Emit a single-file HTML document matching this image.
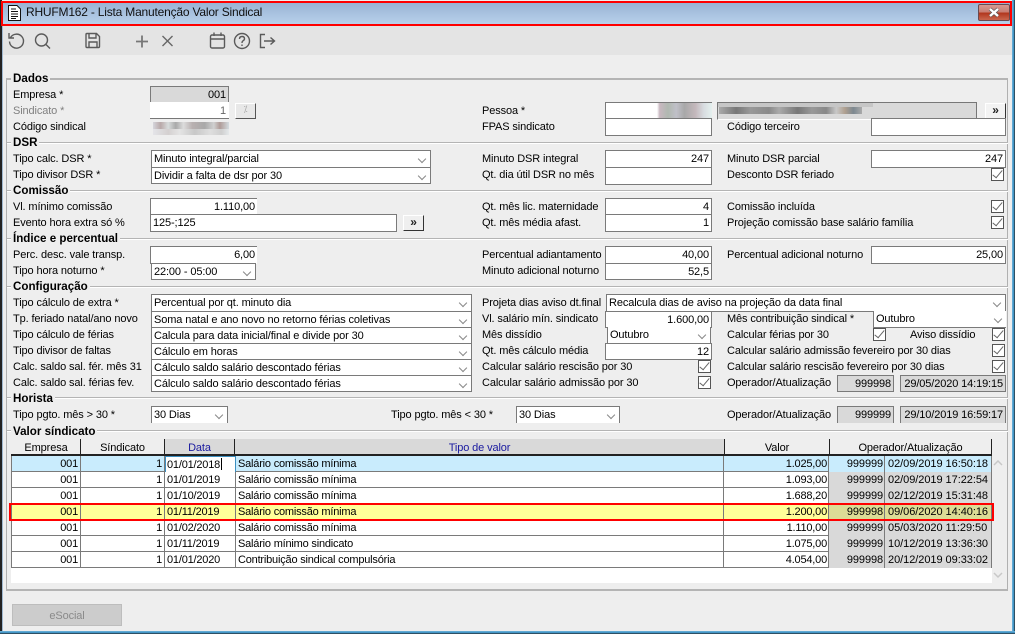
<!DOCTYPE html>
<html><head><meta charset="utf-8">
<style>
html,body{margin:0;padding:0;width:1016px;height:635px;overflow:hidden;background:#fff;font-family:"Liberation Sans",sans-serif;font-size:11px;letter-spacing:-.12px;color:#000}
#w{position:absolute;left:0;top:0;width:1016px;height:635px;overflow:hidden}
.a{position:absolute;box-sizing:border-box}
.t{position:absolute;white-space:nowrap;line-height:14px;height:14px;margin-top:1px}
.g{color:#808080}
.b{position:absolute;white-space:nowrap;font-weight:bold;line-height:14px;background:#eee;padding:0 2px;font-size:11.6px;letter-spacing:0;color:#000;margin-top:1px}
.h{position:absolute;height:2px;background:#b4b4b4;border-bottom:1px solid #fff;box-sizing:border-box}
.i{position:absolute;box-sizing:border-box;border:1px solid #7a7a7a;background:#fff;line-height:17px;text-align:right;padding:0 2px;white-space:nowrap;overflow:hidden}
.d{background:#d9d9d9}
.s{position:absolute;box-sizing:border-box;border:1px solid #7a7a7a;background:#fff;line-height:16px;padding:0 2px;white-space:nowrap;overflow:hidden}
.s:after{content:"";position:absolute;right:5px;top:5px;width:5px;height:5px;border-right:1px solid #888;border-bottom:1px solid #888;transform:rotate(45deg)}
.c{position:absolute;width:13px;height:13px;box-sizing:border-box;border:1px solid #555;background:#fff}
.c:after{content:"";position:absolute;left:3px;top:-1px;width:4px;height:9px;border-right:1.4px solid #666;border-bottom:1.4px solid #666;transform:rotate(40deg)}
.btn{position:absolute;box-sizing:border-box;width:21px;height:16px;background:#efefef;border-top:1px solid #fff;border-left:1px solid #fff;border-right:1px solid #333;border-bottom:1px solid #333;text-align:center;line-height:12px;font-size:12px;font-weight:bold;color:#222}
.hd{position:absolute;top:439px;height:16px;background:#eeeeee;text-align:center;line-height:18px;border-right:1px solid #222;box-sizing:border-box}
.r{position:absolute;height:16px;left:11px;width:981px;background:#fff;border-bottom:1px solid #7a7a7a;box-sizing:border-box;letter-spacing:-.2px}
.r div{position:absolute;top:0;height:16px;line-height:17px;white-space:nowrap;box-sizing:border-box;padding:0 2px;border-right:1px solid #7a7a7a}
.n{text-align:right}
.c0{left:0;width:70px}.c1{left:70px;width:84px}.c2{left:154px;width:71px}.c3{left:225px;width:488px}.r .c4{left:713px;width:105px;padding-right:1px}.r .c5{left:818px;width:56px;background:#d9d9d9;padding-right:1px;letter-spacing:-.1px}.r .c6{left:874px;width:107px;background:#d9d9d9;padding-left:3px;letter-spacing:-.05px}
</style></head>
<body><div id="w">
<!-- window frame -->
<div class="a" style="left:0;top:0;width:1013px;height:632px;background:#eeeeee"></div>
<div class="a" style="left:0;top:0;width:2px;height:632px;background:#222"></div>
<div class="a" style="left:2px;top:24px;width:1px;height:608px;background:#9fb8d0"></div>
<div class="a" style="left:1012px;top:0;width:3px;height:634px;background:linear-gradient(90deg,#6fb4dc,#3c8fc0 60%,#222)"></div>
<div class="a" style="left:0;top:631px;width:1015px;height:3px;background:linear-gradient(180deg,#6fb4dc,#3c8fc0 60%,#222)"></div>
<!-- title -->
<div class="a" style="left:2px;top:2px;width:1010px;height:23px;background:linear-gradient(180deg,#98b2d3,#b9d2ec)"></div>
<svg class="a" style="left:7px;top:4px" width="15" height="18" viewBox="0 0 15 18"><path d="M1.5 1.5H10L13.5 5V16.5H1.5Z" fill="#fff" stroke="#111"/><path d="M4 5H9M4 7.5H11M4 10H11M4 12.5H11M4 14.5H9" stroke="#111"/></svg>
<div class="t" style="left:26px;top:4px;font-size:12px;letter-spacing:-.2px;line-height:15px;height:15px;color:#111">RHUFM162 - Lista Manutenção Valor Sindical</div>
<div class="a" style="left:978px;top:4px;width:32px;height:17px;border:1px solid #6a4a50;border-radius:2px;background:linear-gradient(180deg,#d49a92 0%,#c97f74 45%,#b2381f 55%,#c9664e 100%)"></div>
<svg class="a" style="left:978px;top:4px" width="32" height="17" viewBox="0 0 32 17"><path d="M12 5L20 12M20 5L12 12" stroke="#555" stroke-width="3.6"/><path d="M12 5L20 12M20 5L12 12" stroke="#fff" stroke-width="2.4"/></svg>
<div class="a" style="left:1px;top:1px;width:1011px;height:25px;border:2px solid #f00"></div>
<!-- toolbar -->
<div class="a" style="left:3px;top:26px;width:1009px;height:29px;background:#e4e4e4"></div>
<svg class="a" style="left:0;top:26px" width="290" height="30" viewBox="0 0 290 30" fill="none" stroke="#5a5a5a" stroke-width="1.4">
<path d="M10.5 11.5A7 7 0 1 1 9.5 15.5M9 7V12H14"/>
<circle cx="41.5" cy="14" r="6"/><path d="M46 18.5L50 22.5"/>
<path d="M86 8.5Q86 7.5 87 7.5H96.5L99.5 10.5V20.5Q99.5 21.5 98.5 21.5H87Q86 21.5 86 20.5ZM89 7.5V12H96V7.5M89 21.5V16H97V21.5"/>
<path d="M142 9.500V21.500M136 15.500H148" stroke="#777" stroke-width="1.8"/>
<path d="M162.500 10L172.500 20M172.500 10L162.500 20" stroke="#666"/>
<rect x="210.500" y="9" width="14" height="13" rx="1.500"/><path d="M210.500 13H224.500M214 6.500V10M221 6.500V10"/>
<circle cx="242" cy="15" r="7.500"/><path d="M239.500 13Q239.500 10.500 242 10.500Q244.500 10.500 244.500 12.700Q244.500 14 243 14.800Q242 15.500 242 17"/><path d="M242 18.500V20"/>
<path d="M265 8.500H260.500V21.500H265M264 15H274M270.500 11.500L274.500 15L270.500 18.500"/>
</svg>

<!-- section lines -->
<div class="a" style="left:6px;top:78px;width:1002px;height:513px;border:1px solid #b0b0b0;border-top:2px solid #b4b4b4;border-bottom:2px solid #b4b4b4"></div>
<div class="h" style="left:7px;top:142px;width:1001px"></div>
<div class="h" style="left:7px;top:190px;width:1001px"></div>
<div class="h" style="left:7px;top:238px;width:1001px"></div>
<div class="h" style="left:7px;top:286px;width:1001px"></div>
<div class="h" style="left:7px;top:397px;width:1001px"></div>
<div class="h" style="left:7px;top:430px;width:1001px"></div>
<div class="b" style="left:11px;top:71px">Dados</div>
<div class="b" style="left:11px;top:135px">DSR</div>
<div class="b" style="left:11px;top:183px">Comissão</div>
<div class="b" style="left:11px;top:231px">Índice e percentual</div>
<div class="b" style="left:11px;top:279px">Configuração</div>
<div class="b" style="left:11px;top:391px">Horista</div>
<div class="b" style="left:11px;top:424px">Valor síndicato</div>

<!-- Dados -->
<div class="t" style="left:13px;top:87px">Empresa *</div>
<div class="i d" style="left:150px;top:86px;width:79px;height:17px">001</div>
<div class="t g" style="left:13px;top:103px">Sindicato *</div>
<div class="i" style="left:150px;top:102px;width:79px;height:17px;border-color:#fff;color:#666">1</div>
<div class="a" style="left:235px;top:103px;width:21px;height:16px;background:#e8e8e8;border-right:1px solid #555;border-bottom:1px solid #555;border-top:1px solid #fff;border-left:1px solid #fff;font-size:9px;line-height:11px;text-align:center;color:#aaa">⁒</div>
<div class="t" style="left:13px;top:119px">Código sindical</div>
<div class="a" style="left:150px;top:118px;width:79px;height:18px;background:#eee;border-top:1px solid #777"></div>
<div class="a" style="left:153px;top:122px;width:76px;height:7px;background:linear-gradient(90deg,#d6d6dc,#b9a9a9 10%,#d8dcdc 20%,#a9a9a9 30%,#dcdcdc 40%,#b8b0b0 52%,#a9a9a9 68%,#d0d0d0 80%,#b09c98 88%,#d4dce0)"></div>
<div class="a" style="left:153px;top:129px;width:76px;height:6px;background:linear-gradient(90deg,#e4e4e8,#d4d0d0 20%,#e4e4e4 35%,#c8c8c8 55%,#dedede 75%,#cfcfcf 90%,#e4e8ea)"></div>
<div class="t" style="left:482px;top:103px">Pessoa *</div>
<div class="i" style="left:605px;top:102px;width:107px;height:17px"></div>
<div class="a" style="left:657px;top:103px;width:55px;height:15px;background:linear-gradient(90deg,#fff 0,#c8b8c0 5%,#b0b8b0 20%,#c0c0c8 35%,#a8a8a8 50%,#c4b8bc 70%,#d8dce0 85%,#e4f0ee)"></div>
<div class="t" style="left:482px;top:119px">FPAS sindicato</div>
<div class="i" style="left:605px;top:118px;width:107px;height:18px"></div>
<div class="a" style="left:717px;top:102px;width:260px;height:18px;border:1px solid #777;border-top:1px solid #777;background:#d9d9d9;border-bottom:1px solid #fff"></div>
<div class="a" style="left:718px;top:103px;width:155px;height:4px;background:#c6c6c6"></div>
<div class="a" style="left:719px;top:107px;width:143px;height:7px;background:linear-gradient(90deg,#aaa,#777 12%,#999 22%,#8a8a8a 35%,#aaa 42%,#777 55%,#999 65%,#888 75%,#c8c8c8 82%,#b0a090 88%,#7c8890 94%,#aaa)"></div>
<div class="btn" style="left:985px;top:103px;background:#f3f3f3">»</div>
<div class="t" style="left:727px;top:119px">Código terceiro</div>
<div class="i" style="left:871px;top:118px;width:135px;height:18px"></div>

<!-- DSR -->
<div class="t" style="left:13px;top:151px">Tipo calc. DSR *</div>
<div class="s" style="left:151px;top:150px;width:280px;height:18px">Minuto integral/parcial</div>
<div class="t" style="left:13px;top:167px">Tipo divisor DSR *</div>
<div class="s" style="left:151px;top:167px;width:280px;height:17px">Dividir a falta de dsr por 30</div>
<div class="t" style="left:482px;top:151px">Minuto DSR integral</div>
<div class="i" style="left:605px;top:150px;width:107px;height:18px">247</div>
<div class="t" style="left:482px;top:167px">Qt. dia útil DSR no mês</div>
<div class="i" style="left:605px;top:167px;width:107px;height:18px"></div>
<div class="t" style="left:727px;top:151px">Minuto DSR parcial</div>
<div class="i" style="left:871px;top:150px;width:135px;height:18px">247</div>
<div class="t" style="left:727px;top:167px">Desconto DSR feriado</div>
<div class="c" style="left:991px;top:168px"></div>

<!-- Comissão -->
<div class="t" style="left:13px;top:199px">Vl. mínimo comissão</div>
<div class="i" style="left:150px;top:198px;width:107px;height:17px;border-bottom:0;border-right:0">1.110,00</div>
<div class="t" style="left:13px;top:215px">Evento hora extra só %</div>
<div class="i" style="left:150px;top:214px;width:247px;height:18px;text-align:left">125-;125</div>
<div class="btn" style="left:403px;top:215px">»</div>
<div class="t" style="left:482px;top:199px">Qt. mês lic. maternidade</div>
<div class="i" style="left:605px;top:198px;width:107px;height:17px">4</div>
<div class="t" style="left:482px;top:215px">Qt. mês média afast.</div>
<div class="i" style="left:605px;top:214px;width:107px;height:18px">1</div>
<div class="t" style="left:727px;top:199px">Comissão incluída</div>
<div class="c" style="left:991px;top:200px"></div>
<div class="t" style="left:727px;top:215px">Projeção comissão base salário família</div>
<div class="c" style="left:991px;top:216px"></div>

<!-- Índice -->
<div class="t" style="left:13px;top:247px">Perc. desc. vale transp.</div>
<div class="i" style="left:150px;top:246px;width:107px;height:18px;border-right:0;border-bottom:0">6,00</div>
<div class="t" style="left:13px;top:263px">Tipo hora noturno *</div>
<div class="s" style="left:151px;top:263px;width:105px;height:17px">22:00 - 05:00</div>
<div class="t" style="left:482px;top:247px">Percentual adiantamento</div>
<div class="i" style="left:605px;top:246px;width:107px;height:18px">40,00</div>
<div class="t" style="left:482px;top:263px">Minuto adicional noturno</div>
<div class="i" style="left:605px;top:263px;width:107px;height:17px">52,5</div>
<div class="t" style="left:727px;top:247px">Percentual adicional noturno</div>
<div class="i" style="left:871px;top:246px;width:135px;height:18px">25,00</div>

<!-- Configuração -->
<div class="t" style="left:13px;top:295px">Tipo cálculo de extra *</div>
<div class="s" style="left:151px;top:294px;width:321px;height:18px">Percentual por qt. minuto dia</div>
<div class="t" style="left:13px;top:311px">Tp. feriado natal/ano novo</div>
<div class="s" style="left:151px;top:311px;width:321px;height:17px">Soma natal e ano novo no retorno férias coletivas</div>
<div class="t" style="left:13px;top:327px">Tipo cálculo de férias</div>
<div class="s" style="left:151px;top:327px;width:321px;height:17px">Calcula para data inicial/final e divide por 30</div>
<div class="t" style="left:13px;top:343px">Tipo divisor de faltas</div>
<div class="s" style="left:151px;top:343px;width:321px;height:17px">Cálculo em horas</div>
<div class="t" style="left:13px;top:359px">Calc. saldo sal. fér. mês 31</div>
<div class="s" style="left:151px;top:359px;width:321px;height:17px">Cálculo saldo salário descontado férias</div>
<div class="t" style="left:13px;top:375px">Calc. saldo sal. férias fev.</div>
<div class="s" style="left:151px;top:375px;width:321px;height:17px">Cálculo saldo salário descontado férias</div>

<div class="t" style="left:482px;top:295px">Projeta dias aviso dt.final</div>
<div class="s" style="left:606px;top:294px;width:400px;height:18px">Recalcula dias de aviso na projeção da data final</div>
<div class="t" style="left:482px;top:311px">Vl. salário mín. sindicato</div>
<div class="i" style="left:605px;top:311px;width:107px;height:17px">1.600,00</div>
<div class="t" style="left:727px;top:311px">Mês contribuição sindical *</div>
<div class="s" style="left:873px;top:311px;width:133px;height:17px;border-top:0;border-right:0;padding-top:0">Outubro</div>
<div class="t" style="left:482px;top:327px">Mês dissídio</div>
<div class="s" style="left:607px;top:327px;width:104px;height:17px;border-top:0;padding-top:0">Outubro</div>
<div class="t" style="left:727px;top:327px">Calcular férias por 30</div>
<div class="c" style="left:873px;top:328px"></div>
<div class="t" style="left:910px;top:327px">Aviso dissídio</div>
<div class="c" style="left:992px;top:328px"></div>
<div class="t" style="left:482px;top:343px">Qt. mês cálculo média</div>
<div class="i" style="left:605px;top:343px;width:107px;height:17px">12</div>
<div class="t" style="left:727px;top:343px">Calcular salário admissão fevereiro por 30 dias</div>
<div class="c" style="left:992px;top:344px"></div>
<div class="t" style="left:482px;top:359px">Calcular salário rescisão por 30</div>
<div class="c" style="left:698px;top:360px"></div>
<div class="t" style="left:727px;top:359px">Calcular salário rescisão fevereiro por 30 dias</div>
<div class="c" style="left:992px;top:360px"></div>
<div class="t" style="left:482px;top:375px">Calcular salário admissão por 30</div>
<div class="c" style="left:698px;top:376px"></div>
<div class="t" style="left:727px;top:375px">Operador/Atualização</div>
<div class="i d" style="left:837px;top:375px;width:57px;height:17px">999998</div>
<div class="i d" style="left:900px;top:375px;width:106px;height:17px">29/05/2020 14:19:15</div>

<!-- Horista -->
<div class="t" style="left:13px;top:407px">Tipo pgto. mês &gt; 30 *</div>
<div class="s" style="left:151px;top:406px;width:77px;height:17px;border-bottom:0">30 Dias</div>
<div class="t" style="left:391px;top:407px">Tipo pgto. mês &lt; 30 *</div>
<div class="s" style="left:516px;top:406px;width:104px;height:17px;border-bottom:0">30 Dias</div>
<div class="t" style="left:727px;top:407px">Operador/Atualização</div>
<div class="i d" style="left:837px;top:406px;width:57px;height:17px;border-bottom:0">999999</div>
<div class="i d" style="left:900px;top:406px;width:106px;height:17px;border-bottom:0">29/10/2019 16:59:17</div>

<!-- Table -->
<div class="a" style="left:11px;top:455px;width:981px;height:128px;background:#fff"></div>
<div class="hd" style="left:12px;width:69px">Empresa</div>
<div class="hd" style="left:81px;width:84px">Síndicato</div>
<div class="hd" style="left:165px;width:70px;background:#d9d9d9;color:#1a1aa0">Data</div>
<div class="hd" style="left:235px;width:490px;background:#d9d9d9;color:#1a1aa0">Tipo de valor</div>
<div class="hd" style="left:725px;width:105px">Valor</div>
<div class="hd" style="left:830px;width:162px">Operador/Atualização</div>
<div class="a" style="left:11px;top:454px;width:981px;height:2px;background:#222"></div>

<div class="r" style="top:456px;background:#c9ecfd"><div class="c0 n">001</div><div class="c1 n">1</div><div class="c2" style="background:#fff;border:1px solid #3c8fc0;border-bottom:0;padding:0 1px">01/01/2018</div><div class="c3">Salário comissão mínima</div><div class="c4 n">1.025,00</div><div class="c5 n" style="background:#c9ecfd">999999</div><div class="c6" style="background:#c9ecfd">02/09/2019 16:50:18</div></div>
<div class="a" style="left:221px;top:458px;width:1px;height:12px;background:#000"></div>
<div class="r" style="top:472px"><div class="c0 n">001</div><div class="c1 n">1</div><div class="c2">01/01/2019</div><div class="c3">Salário comissão mínima</div><div class="c4 n">1.093,00</div><div class="c5 n">999999</div><div class="c6">02/09/2019 17:22:54</div></div>
<div class="r" style="top:488px"><div class="c0 n">001</div><div class="c1 n">1</div><div class="c2">01/10/2019</div><div class="c3">Salário comissão mínima</div><div class="c4 n">1.688,20</div><div class="c5 n">999999</div><div class="c6">02/12/2019 15:31:48</div></div>
<div class="r" style="top:504px;background:#ffff99"><div class="c0 n">001</div><div class="c1 n">1</div><div class="c2">01/11/2019</div><div class="c3">Salário comissão mínima</div><div class="c4 n">1.200,00</div><div class="c5 n" style="background:#dcdc96">999998</div><div class="c6" style="background:#dcdc96">09/06/2020 14:40:16</div></div>
<div class="r" style="top:520px"><div class="c0 n">001</div><div class="c1 n">1</div><div class="c2">01/02/2020</div><div class="c3">Salário comissão mínima</div><div class="c4 n">1.110,00</div><div class="c5 n">999999</div><div class="c6">05/03/2020 11:29:50</div></div>
<div class="r" style="top:536px"><div class="c0 n">001</div><div class="c1 n">1</div><div class="c2">01/11/2019</div><div class="c3">Salário mínimo sindicato</div><div class="c4 n">1.075,00</div><div class="c5 n">999999</div><div class="c6">10/12/2019 13:36:30</div></div>
<div class="r" style="top:552px"><div class="c0 n">001</div><div class="c1 n">1</div><div class="c2">01/01/2020</div><div class="c3">Contribuição sindical compulsória</div><div class="c4 n">4.054,00</div><div class="c5 n">999998</div><div class="c6">20/12/2019 09:33:02</div></div>
<div class="a" style="left:11px;top:456px;width:1px;height:112px;background:#7a7a7a"></div>
<div class="a" style="left:9px;top:503px;width:985px;height:18px;border:2px solid #f00"></div>
<svg class="a" style="left:992px;top:456px" width="14" height="124" viewBox="0 0 14 124" fill="none" stroke="#c8c8c8" stroke-width="1.500"><path d="M2 9L6 5L10 9"/><path d="M2 117L6 121L10 117"/></svg>

<!-- eSocial -->
<div class="a" style="left:12px;top:604px;width:110px;height:22px;background:#cccccc;border:1px solid #bdbdbd;color:#8a8a8a;text-align:center;line-height:22px">eSocial</div>
</div></body></html>
